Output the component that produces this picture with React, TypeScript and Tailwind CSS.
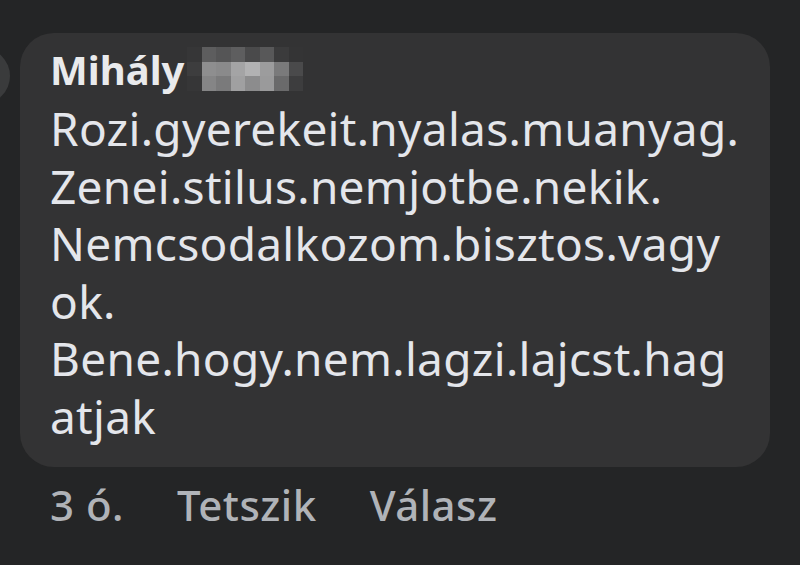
const LINES = [
  "Rozi.gyerekeit.nyalas.muanyag.",
  "Zenei.stilus.nemjotbe.nekik.",
  "Nemcsodalkozom.bisztos.vagy",
  "ok.",
  "Bene.hogy.nem.lagzi.lajcst.hag",
  "atjak",
];

// pixelated name censor, rows of gray shades
const MOSAIC = [
  ["#363637", "#5d5d5e", "#555556", "#5e5e5f", "#4a4a4b", "#585859", "#3b3b3c", "#343435"],
  ["#3d3d3e", "#8e8e8f", "#8a8a8b", "#a4a4a5", "#b2b2b3", "#9c9c9d", "#7a7a7b", "#4a4a4b"],
  ["#363637", "#858586", "#7a7a7b", "#a0a0a1", "#8c8c8d", "#9a9a9b", "#6a6a6b", "#3d3d3e"],
];

export default function App() {
  return (
    <div className="relative w-[800px] h-[565px] overflow-hidden bg-[#242526] font-['Noto_Sans',sans-serif]">
      {/* avatar sliver on the left edge */}
      <div className="absolute left-[-46px] top-[48px] w-[56px] h-[56px] rounded-full bg-[#3a3b3c]" />

      <div className="ml-[20px] pt-[33px]">
        <div className="w-[750px] rounded-[34px] bg-[#333334] pl-[30px] pr-[20px] pt-[14px] pb-[22px]">
          <div className="flex items-start">
            <span className="text-[40px] leading-[46px] font-bold text-[#e9eaec]">Mihály</span>
            <div className="ml-[3px] flex flex-col">
              {MOSAIC.map((row, i) => (
                <div key={i} className="flex">
                  {row.map((c, j) => (
                    <div key={j} className="w-[14.5px] h-[14.5px]" style={{ backgroundColor: c }} />
                  ))}
                </div>
              ))}
            </div>
          </div>
          <div className="mt-[7px] text-[46px] leading-[57.5px] tracking-[0.3px] text-[#e4e6eb]">
            {LINES.map((l, i) => (
              <div key={i} className="whitespace-nowrap">{l}</div>
            ))}
          </div>
        </div>

        <div className="flex items-center pl-[30px] pt-[13px] text-[42px] leading-[50px] tracking-[0.5px] font-medium text-[#b0b3b8]">
          <span>3 ó.</span>
          <span className="ml-[53px]">Tetszik</span>
          <span className="ml-[53px]">Válasz</span>
        </div>
      </div>
    </div>
  );
}
